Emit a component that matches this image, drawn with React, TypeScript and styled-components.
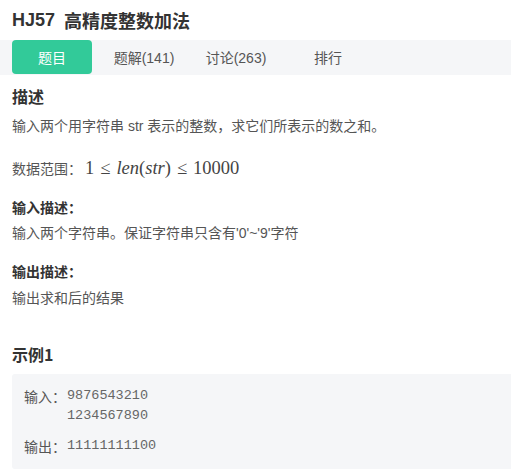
import React from 'react';
import styled, { createGlobalStyle } from 'styled-components';

const GlobalStyle = createGlobalStyle`
  html, body {
    margin: 0;
    padding: 0;
    background: #ffffff;
  }
  body {
    font-family: "Noto Sans CJK SC", "Liberation Sans", sans-serif;
    color: #333;
  }
`;

const Page = styled.div`
  width: 511px;
  overflow: hidden;
`;

const TitleBar = styled.h1`
  margin: 0;
  height: 40px;
  padding: 0 12px;
  display: flex;
  align-items: center;
  font-size: 18px;
  font-weight: 700;
  color: #333;
  font-family: "Liberation Sans", "Noto Sans CJK SC", sans-serif;
`;

const TitleCode = styled.span`
  margin-right: 9px;
`;

const TabBar = styled.div`
  height: 35px;
  background: #f5f6f8;
  padding-left: 12px;
  display: flex;
  gap: 12px;
`;

const Tab = styled.div<{ $active?: boolean }>`
  width: 80px;
  height: 34px;
  border-radius: 4px;
  display: flex;
  align-items: center;
  justify-content: center;
  font-size: 14px;
  font-family: "Liberation Sans", "Noto Sans CJK SC", sans-serif;
  color: ${(p) => (p.$active ? '#ffffff' : '#555')};
  background: ${(p) => (p.$active ? '#32ca99' : 'transparent')};
`;

const Content = styled.div`
  padding-left: 12px;
`;

const SectionTitle = styled.h2<{ $top: number }>`
  margin: ${(p) => p.$top}px 0 0;
  font-size: 16px;
  line-height: 24px;
  font-weight: 700;
  color: #333;
`;

const SubTitle = styled.h3<{ $top: number }>`
  margin: ${(p) => p.$top}px 0 0;
  font-size: 14px;
  line-height: 20px;
  font-weight: 700;
  color: #333;
`;

const Para = styled.p<{ $top: number }>`
  margin: ${(p) => p.$top}px 0 0;
  font-size: 14px;
  line-height: 20px;
  color: #555;
  font-family: "Liberation Sans", "Noto Sans CJK SC", sans-serif;
`;

const MathLine = styled.p`
  margin: 20px 0 0;
  font-size: 14px;
  line-height: 24px;
  color: #555;
  display: flex;
  align-items: center;
`;

const Math = styled.span`
  font-family: "Liberation Serif", "DejaVu Serif", serif;
  font-size: 18.5px;
  color: #444;
  margin-left: 3px;
`;

const Rel = styled.span`
  margin: 0 6px;
`;

const Var = styled.i`
  font-style: italic;
`;

const ExampleBox = styled.div`
  margin-top: 8px;
  background: #f5f6f8;
  border-radius: 3px 0 0 3px;
  padding: 12px 12px 13px;
  height: 95px;
  box-sizing: border-box;
`;

const IoRow = styled.div<{ $top?: number }>`
  display: flex;
  margin-top: ${(p) => p.$top ?? 0}px;
`;

const IoLabel = styled.span`
  font-size: 14px;
  line-height: 20px;
  color: #555;
  width: 43px;
  flex-shrink: 0;
`;

const IoValue = styled.pre`
  margin: 0;
  font-family: "Liberation Mono", "DejaVu Sans Mono", monospace;
  font-size: 13.5px;
  line-height: 20px;
  color: #666;
`;

export default function App() {
  return (
    <Page>
      <GlobalStyle />
      <TitleBar>
        <TitleCode>HJ57</TitleCode>高精度整数加法
      </TitleBar>
      <TabBar>
        <Tab $active>题目</Tab>
        <Tab>题解(141)</Tab>
        <Tab>讨论(263)</Tab>
        <Tab>排行</Tab>
      </TabBar>
      <Content>
        <SectionTitle $top={9}>描述</SectionTitle>
        <Para $top={8}>输入两个用字符串 str 表示的整数，求它们所表示的数之和。</Para>
        <MathLine>
          数据范围：
          <Math>
            1<Rel>≤</Rel>
            <Var>len</Var>(<Var>str</Var>)<Rel>≤</Rel>10000
          </Math>
        </MathLine>
        <SubTitle $top={17}>输入描述：</SubTitle>
        <Para $top={6}>输入两个字符串。保证字符串只含有'0'~'9'字符</Para>
        <SubTitle $top={18}>输出描述：</SubTitle>
        <Para $top={7}>输出求和后的结果</Para>
        <SectionTitle $top={34}>示例1</SectionTitle>
        <ExampleBox>
          <IoRow>
            <IoLabel>输入：</IoLabel>
            <IoValue>{'9876543210\n1234567890'}</IoValue>
          </IoRow>
          <IoRow $top={10}>
            <IoLabel>输出：</IoLabel>
            <IoValue>11111111100</IoValue>
          </IoRow>
        </ExampleBox>
      </Content>
    </Page>
  );
}
